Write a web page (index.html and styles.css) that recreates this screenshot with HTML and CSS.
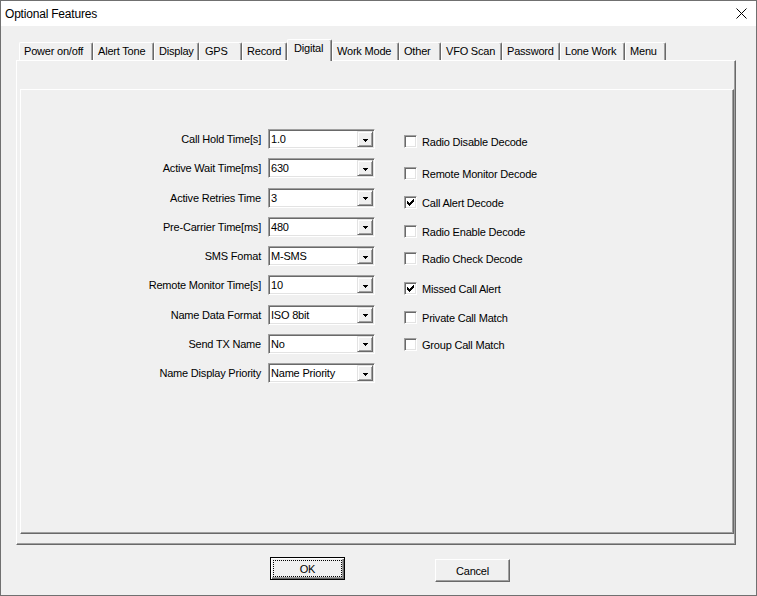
FILE: index.html
```html
<!DOCTYPE html>
<html>
<head>
<meta charset="utf-8">
<title>Optional Features</title>
<link rel="stylesheet" href="styles.css">
</head>
<body>
<div class="window">
  <div class="titlebar">
    <span class="title">Optional Features</span>
    <svg class="close" width="11" height="11" viewBox="0 0 11 11"><path d="M0.5 0.5 L10.5 10.5 M10.5 0.5 L0.5 10.5" stroke="#000" stroke-width="1" fill="none"/></svg>
  </div>
  <div class="client">
    <div class="tabcontrol">
      <div class="tabs">
        <div class="tab t-power">Power on/off</div>
        <div class="tab t-alert">Alert Tone</div>
        <div class="tab t-display">Display</div>
        <div class="tab t-gps">GPS</div>
        <div class="tab t-record">Record</div>
        <div class="tab t-digital selected">Digital</div>
        <div class="tab t-work">Work Mode</div>
        <div class="tab t-other">Other</div>
        <div class="tab t-vfo">VFO Scan</div>
        <div class="tab t-pass">Password</div>
        <div class="tab t-lone">Lone Work</div>
        <div class="tab t-menu">Menu</div>
      </div>
      <div class="page">
        <div class="inner">
          <div class="fields">
            <div class="lbl">Call Hold Time[s]</div>
            <div class="combo"><span class="val">1.0</span><span class="btn"><svg class="arrow" width="5" height="3" viewBox="0 0 5 3"><path d="M0 0h5v1H0z M1 1h3v1H1z M2 2h1v1H2z" fill="#000"/></svg></span></div>
            <div class="lbl">Active Wait Time[ms]</div>
            <div class="combo"><span class="val">630</span><span class="btn"><svg class="arrow" width="5" height="3" viewBox="0 0 5 3"><path d="M0 0h5v1H0z M1 1h3v1H1z M2 2h1v1H2z" fill="#000"/></svg></span></div>
            <div class="lbl">Active Retries Time</div>
            <div class="combo"><span class="val">3</span><span class="btn"><svg class="arrow" width="5" height="3" viewBox="0 0 5 3"><path d="M0 0h5v1H0z M1 1h3v1H1z M2 2h1v1H2z" fill="#000"/></svg></span></div>
            <div class="lbl">Pre-Carrier Time[ms]</div>
            <div class="combo"><span class="val">480</span><span class="btn"><svg class="arrow" width="5" height="3" viewBox="0 0 5 3"><path d="M0 0h5v1H0z M1 1h3v1H1z M2 2h1v1H2z" fill="#000"/></svg></span></div>
            <div class="lbl">SMS Fomat</div>
            <div class="combo"><span class="val">M-SMS</span><span class="btn"><svg class="arrow" width="5" height="3" viewBox="0 0 5 3"><path d="M0 0h5v1H0z M1 1h3v1H1z M2 2h1v1H2z" fill="#000"/></svg></span></div>
            <div class="lbl">Remote Monitor Time[s]</div>
            <div class="combo"><span class="val">10</span><span class="btn"><svg class="arrow" width="5" height="3" viewBox="0 0 5 3"><path d="M0 0h5v1H0z M1 1h3v1H1z M2 2h1v1H2z" fill="#000"/></svg></span></div>
            <div class="lbl">Name Data Format</div>
            <div class="combo"><span class="val">ISO 8bit</span><span class="btn"><svg class="arrow" width="5" height="3" viewBox="0 0 5 3"><path d="M0 0h5v1H0z M1 1h3v1H1z M2 2h1v1H2z" fill="#000"/></svg></span></div>
            <div class="lbl">Send TX Name</div>
            <div class="combo"><span class="val">No</span><span class="btn"><svg class="arrow" width="5" height="3" viewBox="0 0 5 3"><path d="M0 0h5v1H0z M1 1h3v1H1z M2 2h1v1H2z" fill="#000"/></svg></span></div>
            <div class="lbl">Name Display Priority</div>
            <div class="combo"><span class="val">Name Priority</span><span class="btn"><svg class="arrow" width="5" height="3" viewBox="0 0 5 3"><path d="M0 0h5v1H0z M1 1h3v1H1z M2 2h1v1H2z" fill="#000"/></svg></span></div>
          </div>
          <div class="checks">
            <div class="chk"><span class="box"></span><span>Radio Disable Decode</span></div>
            <div class="chk"><span class="box"></span><span>Remote Monitor Decode</span></div>
            <div class="chk"><span class="box"><svg class="mark" width="7" height="7" viewBox="0 0 7 7"><path d="M6 0h1v1h-1z M5 1h2v1h-2z M0 2h1v1H0z M4 2h3v1H4z M0 3h2v1H0z M3 3h3v1H3z M0 4h5v1H0z M1 5h3v1H1z M2 6h1v1H2z" fill="#000"/></svg></span><span>Call Alert Decode</span></div>
            <div class="chk"><span class="box"></span><span>Radio Enable Decode</span></div>
            <div class="chk"><span class="box"></span><span>Radio Check Decode</span></div>
            <div class="chk"><span class="box"><svg class="mark" width="7" height="7" viewBox="0 0 7 7"><path d="M6 0h1v1h-1z M5 1h2v1h-2z M0 2h1v1H0z M4 2h3v1H4z M0 3h2v1H0z M3 3h3v1H3z M0 4h5v1H0z M1 5h3v1H1z M2 6h1v1H2z" fill="#000"/></svg></span><span>Missed Call Alert</span></div>
            <div class="chk"><span class="box"></span><span>Private Call Match</span></div>
            <div class="chk"><span class="box"></span><span>Group Call Match</span></div>
          </div>
        </div>
      </div>
    </div>
    <div class="buttons">
      <div class="button default"><span class="focus">OK</span></div>
      <div class="button cancel">Cancel</div>
    </div>
  </div>
</div>
</body>
</html>
```
FILE: styles.css
```css
html, body {
  margin: 0;
  padding: 0;
}
body {
  width: 757px;
  height: 596px;
  overflow: hidden;
  font-family: "Liberation Sans", Arial, sans-serif;
  font-size: 11px;
  color: #000;
  background: #f0f0f0;
}
.window {
  box-sizing: border-box;
  width: 757px;
  height: 596px;
  border: 1px solid #707070;
  background: #f0f0f0;
  display: flex;
  flex-direction: column;
}
.titlebar {
  flex: none;
  height: 25px;
  background: #fff;
  display: flex;
  align-items: center;
  padding-left: 4px;
  padding-right: 9px;
}
.title {
  font-size: 12px;
  letter-spacing: -0.2px;
}
.close {
  display: block;
  margin-left: auto;
}
.client {
  flex: 1;
  display: flex;
  flex-direction: column;
  padding-left: 15px;
}
.tabcontrol {
  margin-top: 13px;
  width: 720px;
}
.tabs {
  display: flex;
  align-items: flex-end;
  height: 21px;
  padding-left: 3px;
}
.tab {
  box-sizing: border-box;
  height: 18px;
  line-height: 17px;
  border-top: 1px solid #fff;
  border-left: 1px solid #fff;
  border-right: 1px solid #696969;
  box-shadow: inset -1px 0 #a0a0a0;
  border-radius: 2px 2px 0 0;
  padding-left: 4px;
  white-space: nowrap;
  letter-spacing: -0.2px;
  background: #f0f0f0;
}
.tab.selected {
  position: relative;
  z-index: 1;
  height: 22px;
  margin-bottom: -1px;
  padding-left: 6px;
}
.t-power { width: 74px; }
.t-alert { width: 61px; }
.t-display { width: 45px; }
.t-gps { width: 43px; padding-left: 5px; }
.t-record { width: 45px; }
.t-digital { width: 45px; }
.t-work { width: 67px; }
.t-other { width: 42px; }
.t-vfo { width: 61px; }
.t-pass { width: 58px; }
.t-lone { width: 65px; }
.t-menu { width: 41px; }

.page {
  box-sizing: border-box;
  height: 485px;
  border-top: 1px solid #fff;
  border-left: 1px solid #fff;
  border-right: 1px solid #696969;
  border-bottom: 1px solid #696969;
  box-shadow: inset -1px -1px #a0a0a0;
  padding: 28px 1px 10px 3px;
  display: flex;
}
.inner {
  flex: 1;
  box-sizing: border-box;
  border-top: 1px solid #fff;
  border-left: 1px solid #fff;
  border-right: 1px solid #696969;
  border-bottom: 1px solid #696969;
  box-shadow: inset -1px -1px #a0a0a0;
  display: flex;
  align-items: flex-start;
}
.fields {
  display: grid;
  grid-template-columns: 240px 107px;
  column-gap: 7px;
  row-gap: 9.25px;
  margin-top: 39px;
  align-items: center;
}
.lbl {
  text-align: right;
  letter-spacing: -0.2px;
  white-space: nowrap;
}
.combo {
  box-sizing: border-box;
  height: 20px;
  background: #fff;
  border-top: 1px solid #a0a0a0;
  border-left: 1px solid #a0a0a0;
  border-right: 1px solid #fff;
  border-bottom: 1px solid #fff;
  box-shadow: inset 1px 1px #696969, inset -1px -1px #e3e3e3;
  display: flex;
  align-items: center;
  padding: 1px 1px 1px 2px;
}
.val {
  flex: 1;
  letter-spacing: -0.2px;
  white-space: nowrap;
}
.btn {
  box-sizing: border-box;
  width: 16px;
  height: 16px;
  background: #f0f0f0;
  border-top: 1px solid #e3e3e3;
  border-left: 1px solid #e3e3e3;
  border-right: 1px solid #696969;
  border-bottom: 1px solid #696969;
  box-shadow: inset 1px 1px #fff, inset -1px -1px #a0a0a0;
  display: flex;
  align-items: center;
  justify-content: center;
}
.arrow {
  display: block;
  margin-top: 2px;
  shape-rendering: crispEdges;
}
.checks {
  margin-left: 29px;
  padding-top: 45px;
  display: flex;
  flex-direction: column;
}
.chk {
  display: flex;
  align-items: center;
  height: 13px;
  gap: 5px;
  letter-spacing: -0.2px;
  white-space: nowrap;
}
.chk:nth-child(2) { margin-top: 19px; }
.chk:nth-child(3) { margin-top: 16px; }
.chk:nth-child(4) { margin-top: 16px; }
.chk:nth-child(5) { margin-top: 14px; }
.chk:nth-child(6) { margin-top: 17px; }
.chk:nth-child(7) { margin-top: 16px; }
.chk:nth-child(8) { margin-top: 14px; }
.box {
  box-sizing: border-box;
  flex: none;
  width: 13px;
  height: 13px;
  background: #fff;
  border-top: 1px solid #a0a0a0;
  border-left: 1px solid #a0a0a0;
  border-right: 1px solid #fff;
  border-bottom: 1px solid #fff;
  box-shadow: inset 1px 1px #696969, inset -1px -1px #e3e3e3;
  display: flex;
  align-items: flex-start;
}
.mark {
  display: block;
  margin: 2px 0 0 2px;
  shape-rendering: crispEdges;
}
.buttons {
  display: flex;
  align-items: flex-start;
  margin-top: 12px;
  padding-left: 254px;
}
.button {
  box-sizing: border-box;
  width: 75px;
  height: 23px;
  background: #f0f0f0;
  border-top: 1px solid #fff;
  border-left: 1px solid #fff;
  border-right: 1px solid #696969;
  border-bottom: 1px solid #696969;
  box-shadow: inset -1px -1px #a0a0a0;
  display: flex;
  align-items: center;
  justify-content: center;
  letter-spacing: -0.2px;
}
.button.default {
  border: 1px solid #000;
  box-shadow: inset 1px 1px #fff, inset -1px -1px #696969, inset -2px -2px #a0a0a0;
}
.focus {
  box-sizing: border-box;
  width: 69px;
  height: 17px;
  border: 1px dotted #000;
  display: flex;
  align-items: center;
  justify-content: center;
}
.cancel {
  margin-left: 90px;
  margin-top: 2px;
}
```
